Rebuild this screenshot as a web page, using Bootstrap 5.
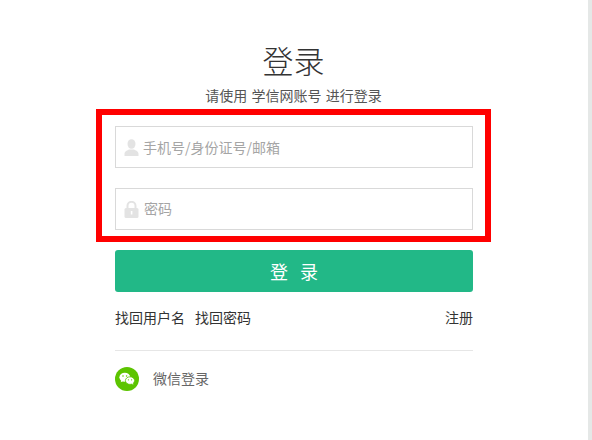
<!DOCTYPE html>
<html lang="zh-CN">
<head>
<meta charset="utf-8">
<title>登录</title>
<link rel="stylesheet" href="https://cdn.jsdelivr.net/npm/bootstrap@5.3.0/dist/css/bootstrap.min.css">
<style>
html,body{height:100%;overflow:hidden}
body{font-family:"Noto Sans CJK SC","Liberation Sans",sans-serif;background:#fff;color:#333;font-size:14px}
.page-wrap{height:440px}
.side-strip{width:4px;background:#e5e8e7}
.login-col{width:395px;margin-left:96px}
.login-title{font-size:31px;line-height:44px;font-weight:300;color:#333;margin:0;padding-top:38px}
.login-sub{font-size:14px;line-height:20px;color:#555;margin:3px 0 0;word-spacing:1px}
.red-box{border:6px solid #f00;padding:11px 12px 0 13px;height:133px;margin-top:4px}
.field-wrap{position:relative;height:42px}
.field-wrap+.field-wrap{margin-top:20px}
.field-input{height:42px;border:1px solid #d9d9d9;border-radius:0;padding:0 10px 0 27px;font-size:14px;color:#333}
.field-input.pw-input{padding-left:28px;padding-bottom:2px}
.field-input::placeholder{color:#a5a5a5}
.field-icon{position:absolute;left:9px;top:13px;width:15px;height:17px}
.login-inner{padding-left:19px;width:377px}
.login-btn{height:42px;width:358px;margin-top:8px;background:#22b887;border:0;border-radius:3px;color:#fff;font-size:18px;letter-spacing:12px;padding:0 0 0 12px;line-height:42px}
.login-btn:hover{background:#22b887;color:#fff}
.links-row{margin-top:15px;width:358px;line-height:20px}
.links-row a{color:#333;text-decoration:none;font-size:14px}
.links-left{gap:10px}
.sep-line{width:358px;margin:23px 0 16px;border-top:1px solid #e6e6e6;height:0}
.wx-text{color:#666;font-size:14px;margin-left:14px;line-height:20px;margin-bottom:2px}
</style>
</head>
<body>
<div class="d-flex page-wrap">
  <div class="flex-grow-1">
    <div class="login-col">
      <div class="text-center">
        <h1 class="login-title">登录</h1>
        <p class="login-sub">请使用 学信网账号 进行登录</p>
      </div>
      <form class="red-box">
        <div class="field-wrap">
          <input class="form-control field-input" type="text" placeholder="手机号/身份证号/邮箱">
          <svg class="field-icon" viewBox="0 0 15 17" aria-hidden="true"><ellipse cx="7.5" cy="5" rx="4" ry="4.8" fill="#e3e3e3"/><path d="M0.5 17v-2.2c0-2.3 3-3.3 4.6-4.2h4.8c1.6.9 4.6 1.9 4.6 4.2V17z" fill="#e3e3e3"/></svg>
        </div>
        <div class="field-wrap">
          <input class="form-control field-input pw-input" type="password" placeholder="密码">
          <svg class="field-icon" viewBox="0 0 15 17" aria-hidden="true"><path d="M3.5 7.5V4.8a4 4 0 0 1 8 0v2.7" fill="none" stroke="#e3e3e3" stroke-width="2"/><rect x="0.5" y="7" width="14" height="10" rx="1.5" fill="#e3e3e3"/><rect x="6.8" y="10" width="1.6" height="3.5" fill="#fff"/></svg>
        </div>
      </form>
      <div class="login-inner">
        <button type="button" class="btn login-btn d-block">登录</button>
        <div class="links-row d-flex justify-content-between">
          <div class="d-flex links-left"><a href="#">找回用户名</a><a href="#">找回密码</a></div>
          <a href="#">注册</a>
        </div>
        <div class="sep-line"></div>
        <div class="d-flex align-items-center">
          <svg width="24" height="24" viewBox="0 0 24 24" aria-hidden="true"><circle cx="12" cy="12" r="12" fill="#5cc400"/><ellipse cx="9.8" cy="10.2" rx="5.4" ry="4.5" fill="#fff"/><path d="M6.5 13l-.8 2.2 2.6-1.3z" fill="#fff"/><ellipse cx="15" cy="13.6" rx="4.6" ry="3.8" fill="#fff" stroke="#5cc400" stroke-width=".8"/><path d="M17 16.5l1.2 1.5-.2-2.4z" fill="#fff"/><circle cx="8" cy="9" r=".8" fill="#5cc400"/><circle cx="11.6" cy="9" r=".8" fill="#5cc400"/><circle cx="13.4" cy="12.8" r=".6" fill="#5cc400"/><circle cx="16.6" cy="12.8" r=".6" fill="#5cc400"/></svg>
          <span class="wx-text">微信登录</span>
        </div>
      </div>
    </div>
  </div>
  <div class="side-strip"></div>
</div>
<script src="https://cdn.jsdelivr.net/npm/bootstrap@5.3.0/dist/js/bootstrap.bundle.min.js"></script>
</body>
</html>
